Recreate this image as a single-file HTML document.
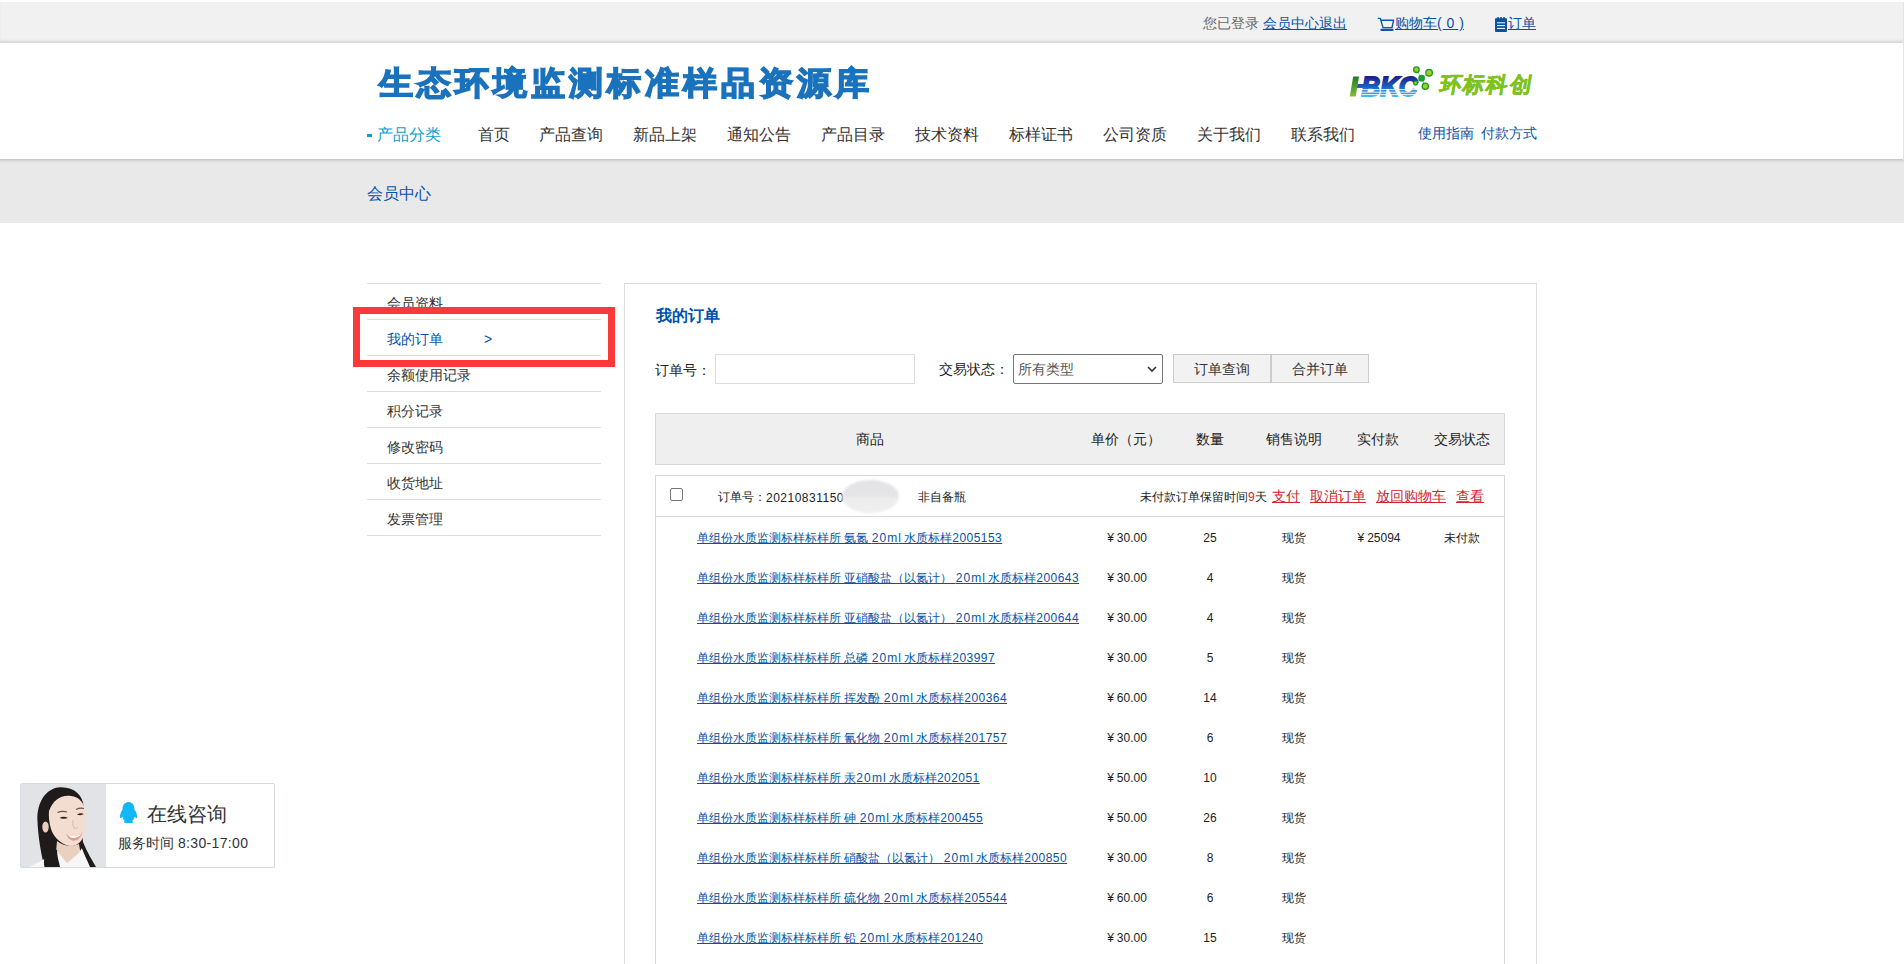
<!DOCTYPE html>
<html><head><meta charset="utf-8">
<style>
*{margin:0;padding:0;box-sizing:border-box}
html,body{width:1904px;height:964px;overflow:hidden;background:#fff}
body{font-family:"Liberation Sans",sans-serif;color:#333;font-size:12px;position:relative}
.abs{position:absolute;white-space:nowrap}
a{color:#0652a8}
#topbar{position:absolute;left:0;top:2px;width:1904px;height:41px;background:#f1f1f1;box-shadow:inset 0 -3px 3px -1px #d6d6d6}
#header{position:absolute;left:0;top:43px;width:1904px;height:117px;background:#fff;border-bottom:1px solid #c8c8c8}
#band{position:absolute;left:0;top:160px;width:1904px;height:63px;background:linear-gradient(#d2d2d2 0px,#e1e1e1 1.5px,#e9e9e9 3.5px,#e9e9e9 100%)}
.logo{font-weight:bold;color:#1a72bd;font-size:34px;letter-spacing:4px;-webkit-text-stroke:1.6px #1a72bd}
.nav{font-size:16px;color:#333}
.side{position:absolute;left:367px;width:234px;height:36px;border-bottom:1px solid #ddd}
.side span{position:absolute;left:20px;top:10.5px;font-size:14px;color:#333}
#panel{position:absolute;left:624px;top:283px;width:913px;height:700px;border:1px solid #ddd}
.th{position:absolute;font-size:14px;color:#222}
.row{position:absolute;left:0;width:849px;height:40px}
.c{position:absolute;font-size:12px;color:#222;white-space:nowrap}
.ctr{text-align:center}
.dg{position:relative;top:1px}
.pl{color:#0652a8;text-decoration:underline}
</style></head><body>

<div id="topbar"></div>
<div class="abs" style="left:1203px;top:15px;font-size:14px;color:#666">您已登录 <a style="color:#0652a8;text-decoration:underline">会员中心退出</a></div>
<svg class="abs" style="left:1377px;top:17px" width="18" height="15" viewBox="0 0 18 15"><path d="M0.8 1.4H3.3L6 10.6H15L16.6 3.2H4" fill="none" stroke="#0b56a8" stroke-width="1.4" stroke-linejoin="round"/><path d="M4.5 12.9H15.5" stroke="#0b56a8" stroke-width="2.3" stroke-linecap="round"/></svg>
<div class="abs" style="left:1395px;top:15px;font-size:14px;color:#0652a8;text-decoration:underline">购物车(<span style="margin:0 1px">&nbsp;0&nbsp;</span>)</div>
<svg class="abs" style="left:1495px;top:17px" width="12" height="15" viewBox="0 0 12 15"><rect x="0" y="1.2" width="12" height="13.8" rx="0.8" fill="#0b52a3"/><circle cx="3" cy="1.2" r="1.1" fill="#0b52a3"/><circle cx="6" cy="1.2" r="1.1" fill="#0b52a3"/><circle cx="9" cy="1.2" r="1.1" fill="#0b52a3"/><path d="M2 5.8H10M2 8.6H10M2 11.4H10" stroke="#fff" stroke-width="1"/></svg>
<div class="abs" style="left:1508px;top:15px;font-size:14px;color:#0652a8;text-decoration:underline">订单</div>

<div id="header"></div>
<div class="abs logo" style="left:379px;top:61px;transform:scaleY(0.94);transform-origin:0 22px">生态环境监测标准样品资源库</div>

<!-- HBKC logo -->
<svg class="abs" style="left:1345px;top:62px" width="195" height="40" viewBox="0 0 195 40">
 <defs>
  <linearGradient id="gb" x1="0" y1="14" x2="0" y2="35" gradientUnits="userSpaceOnUse"><stop offset="0" stop-color="#1f1a86"/><stop offset="0.5" stop-color="#1a5fc0"/><stop offset="1" stop-color="#40bdf5"/></linearGradient>
  <linearGradient id="gg" x1="0" y1="14" x2="0" y2="35" gradientUnits="userSpaceOnUse"><stop offset="0" stop-color="#1d7a2a"/><stop offset="1" stop-color="#86c232"/></linearGradient>
 </defs>
 <path d="M12.5 22H20L19 26H11.5Z" fill="url(#gb)"/>
 <text x="16.5" y="34.4" font-family="Liberation Sans" font-weight="bold" font-style="italic" font-size="27.5" fill="url(#gb)" stroke="url(#gb)" stroke-width="1.8" textLength="56" lengthAdjust="spacingAndGlyphs">BKC</text>
 <path d="M8.2 14.5H14L10.7 34.4H4.7Z" fill="url(#gg)"/>
 <g fill="#fff"><rect x="17" y="27.2" width="60" height="0.9"/><rect x="17" y="29.7" width="60" height="0.9"/><rect x="17" y="32.2" width="60" height="0.9"/></g>
 <path d="M71.4 7.7L76.6 16.2L84.1 10.7M70.6 21L76.6 16.2L80.3 24.2" fill="none" stroke="#8fd08a" stroke-width="1"/>
 <g fill="#9fcf1c" stroke="#1a9a2a" stroke-width="1.3">
  <circle cx="71.4" cy="7.7" r="2.8"/><circle cx="84.1" cy="10.7" r="3.3"/><circle cx="76.6" cy="16.2" r="2.7" fill="#22a02e"/><circle cx="70.6" cy="21" r="1.9"/><circle cx="80.3" cy="24.2" r="3.1"/>
 </g>
 <g transform="translate(94 0) skewX(-10)">
 <text x="5" y="30.4" font-family="Liberation Sans" font-weight="bold" font-size="21.5" fill="#7dc21e" stroke="#7dc21e" stroke-width="0.5" textLength="92" lengthAdjust="spacing">环标科创</text>
 </g>
</svg>

<div class="abs" style="left:367px;top:134px;width:5px;height:3px;background:#10a0cc"></div><div class="abs nav" style="left:377px;top:125px;color:#10a0cc">产品分类</div>
<div class="abs nav" style="left:478px;top:125px">首页</div>
<div class="abs nav" style="left:539px;top:125px">产品查询</div>
<div class="abs nav" style="left:633px;top:125px">新品上架</div>
<div class="abs nav" style="left:727px;top:125px">通知公告</div>
<div class="abs nav" style="left:821px;top:125px">产品目录</div>
<div class="abs nav" style="left:915px;top:125px">技术资料</div>
<div class="abs nav" style="left:1009px;top:125px">标样证书</div>
<div class="abs nav" style="left:1103px;top:125px">公司资质</div>
<div class="abs nav" style="left:1197px;top:125px">关于我们</div>
<div class="abs nav" style="left:1291px;top:125px">联系我们</div>
<div class="abs" style="left:1418px;top:125px;font-size:14px;color:#0652a8">使用指南<span style="margin-left:7px">付款方式</span></div>

<div id="band"></div>
<div class="abs" style="left:1903px;top:2px;width:1px;height:158px;background:#e4e4e4"></div>
<div class="abs" style="left:367px;top:184px;font-size:16px;color:#0652a8">会员中心</div>

<!-- sidebar -->
<div class="abs" style="left:367px;top:283px;width:234px;border-top:1px solid #ddd"></div>
<div class="side" style="top:284px"><span>会员资料</span></div>
<div class="side" style="top:320px"><span style="color:#0652a8">我的订单</span><span style="left:117px;color:#0652a8">&gt;</span></div>
<div class="side" style="top:356px"><span>余额使用记录</span></div>
<div class="side" style="top:392px"><span>积分记录</span></div>
<div class="side" style="top:428px"><span>修改密码</span></div>
<div class="side" style="top:464px"><span>收货地址</span></div>
<div class="side" style="top:500px"><span>发票管理</span></div>
<div class="abs" style="left:353px;top:307px;width:262px;height:60px;border:7px solid #fa3a3a"></div>

<!-- panel -->
<div id="panel"></div>
<div class="abs" style="left:656px;top:305.5px;font-size:16px;font-weight:bold;color:#0050ae">我的订单</div>
<div class="abs" style="left:655px;top:361.5px;font-size:14px;color:#222">订单号：</div>
<div class="abs" style="left:715px;top:354px;width:200px;height:30px;border:1px solid #ddd"></div>
<div class="abs" style="left:939px;top:361px;font-size:14px;color:#222">交易状态：</div>
<div class="abs" style="left:1013px;top:354px;width:150px;height:30px;border:1px solid #767676;border-radius:2px"></div>
<div class="abs" style="left:1018px;top:361px;font-size:14px;color:#555">所有类型</div>
<svg class="abs" style="left:1147px;top:365px" width="10" height="8" viewBox="0 0 10 8"><path d="M1 2L5 6L9 2" fill="none" stroke="#333" stroke-width="1.6"/></svg>
<div class="abs" style="left:1173px;top:354px;width:98px;height:29px;border:1px solid #ccc;background:#f2f2f2"></div>
<div class="abs" style="left:1271px;top:354px;width:98px;height:29px;border:1px solid #ccc;background:#f2f2f2"></div>
<div class="abs" style="left:1194px;top:361px;font-size:14px;color:#333">订单查询</div>
<div class="abs" style="left:1292px;top:361px;font-size:14px;color:#333">合并订单</div>

<!-- table header -->
<div class="abs" style="left:655px;top:413px;width:850px;height:52px;border:1px solid #d8d8d8;background:#efefef"></div>
<div class="th abs" style="left:856px;top:431px">商品</div>
<div class="th abs" style="left:1091px;top:431px">单价（元）</div>
<div class="th abs" style="left:1196px;top:431px">数量</div>
<div class="th abs" style="left:1266px;top:431px">销售说明</div>
<div class="th abs" style="left:1357px;top:431px">实付款</div>
<div class="th abs" style="left:1434px;top:431px">交易状态</div>

<!-- order -->
<div class="abs" style="left:655px;top:475px;width:850px;height:520px;border:1px solid #d8d8d8"></div>
<div class="abs" style="left:656px;top:516px;width:848px;border-top:1px solid #d8d8d8"></div>
<div class="abs" style="left:670px;top:488px;width:13px;height:13px;border:1px solid #767676;border-radius:2px;background:#fff"></div>
<div class="c" style="left:718px;top:489px">订单号：<span class="dg" style="letter-spacing:0.5px">20210831150</span></div>
<div class="abs" style="left:842px;top:480px;width:57px;height:33px;border-radius:50%;background:linear-gradient(#e3e3e5 0%,#e5e5e7 50%,#ececed 55%,#efefef 100%);filter:blur(0.8px)"></div>
<div class="c" style="left:918px;top:489px">非自备瓶</div>
<div class="c" style="left:1140px;top:489px">未付款订单保留时间<span style="color:#d0242e">9</span>天</div>
<div class="c" style="left:1272px;top:488px;font-size:14px;color:#d0242e;text-decoration:underline">支付</div>
<div class="c" style="left:1310px;top:488px;font-size:14px;color:#d0242e;text-decoration:underline">取消订单</div>
<div class="c" style="left:1376px;top:488px;font-size:14px;color:#d0242e;text-decoration:underline">放回购物车</div>
<div class="c" style="left:1456px;top:488px;font-size:14px;color:#d0242e;text-decoration:underline">查看</div>

<div id="rows">
<div class="c pl" style="left:697px;top:530px">单组份水质监测标样标样所 氨氮 <span style="letter-spacing:1.1px">20m</span>l 水质标样<span style="letter-spacing:0.45px">2005153</span></div>
<div class="c ctr" style="left:1087px;width:80px;top:530px"><span class="dg"><span style="margin-right:3px">¥</span>30.00</span></div>
<div class="c ctr" style="left:1170px;width:80px;top:530px"><span class="dg">25</span></div>
<div class="c ctr" style="left:1254px;width:80px;top:530px">现货</div>
<div class="c ctr" style="left:1339px;width:80px;top:530px"><span class="dg"><span style="margin-right:3px">¥</span>25094</span></div>
<div class="c ctr" style="left:1422px;width:80px;top:530px">未付款</div>
<div class="c pl" style="left:697px;top:570px">单组份水质监测标样标样所 亚硝酸盐（以氮计） <span style="letter-spacing:1.1px">20m</span>l 水质标样<span style="letter-spacing:0.45px">200643</span></div>
<div class="c ctr" style="left:1087px;width:80px;top:570px"><span class="dg"><span style="margin-right:3px">¥</span>30.00</span></div>
<div class="c ctr" style="left:1170px;width:80px;top:570px"><span class="dg">4</span></div>
<div class="c ctr" style="left:1254px;width:80px;top:570px">现货</div>
<div class="c pl" style="left:697px;top:610px">单组份水质监测标样标样所 亚硝酸盐（以氮计） <span style="letter-spacing:1.1px">20m</span>l 水质标样<span style="letter-spacing:0.45px">200644</span></div>
<div class="c ctr" style="left:1087px;width:80px;top:610px"><span class="dg"><span style="margin-right:3px">¥</span>30.00</span></div>
<div class="c ctr" style="left:1170px;width:80px;top:610px"><span class="dg">4</span></div>
<div class="c ctr" style="left:1254px;width:80px;top:610px">现货</div>
<div class="c pl" style="left:697px;top:650px">单组份水质监测标样标样所 总磷 <span style="letter-spacing:1.1px">20m</span>l 水质标样<span style="letter-spacing:0.45px">203997</span></div>
<div class="c ctr" style="left:1087px;width:80px;top:650px"><span class="dg"><span style="margin-right:3px">¥</span>30.00</span></div>
<div class="c ctr" style="left:1170px;width:80px;top:650px"><span class="dg">5</span></div>
<div class="c ctr" style="left:1254px;width:80px;top:650px">现货</div>
<div class="c pl" style="left:697px;top:690px">单组份水质监测标样标样所 挥发酚 <span style="letter-spacing:1.1px">20m</span>l 水质标样<span style="letter-spacing:0.45px">200364</span></div>
<div class="c ctr" style="left:1087px;width:80px;top:690px"><span class="dg"><span style="margin-right:3px">¥</span>60.00</span></div>
<div class="c ctr" style="left:1170px;width:80px;top:690px"><span class="dg">14</span></div>
<div class="c ctr" style="left:1254px;width:80px;top:690px">现货</div>
<div class="c pl" style="left:697px;top:730px">单组份水质监测标样标样所 氰化物 <span style="letter-spacing:1.1px">20m</span>l 水质标样<span style="letter-spacing:0.45px">201757</span></div>
<div class="c ctr" style="left:1087px;width:80px;top:730px"><span class="dg"><span style="margin-right:3px">¥</span>30.00</span></div>
<div class="c ctr" style="left:1170px;width:80px;top:730px"><span class="dg">6</span></div>
<div class="c ctr" style="left:1254px;width:80px;top:730px">现货</div>
<div class="c pl" style="left:697px;top:770px">单组份水质监测标样标样所 汞<span style="letter-spacing:1.1px">20m</span>l 水质标样<span style="letter-spacing:0.45px">202051</span></div>
<div class="c ctr" style="left:1087px;width:80px;top:770px"><span class="dg"><span style="margin-right:3px">¥</span>50.00</span></div>
<div class="c ctr" style="left:1170px;width:80px;top:770px"><span class="dg">10</span></div>
<div class="c ctr" style="left:1254px;width:80px;top:770px">现货</div>
<div class="c pl" style="left:697px;top:810px">单组份水质监测标样标样所 砷 <span style="letter-spacing:1.1px">20m</span>l 水质标样<span style="letter-spacing:0.45px">200455</span></div>
<div class="c ctr" style="left:1087px;width:80px;top:810px"><span class="dg"><span style="margin-right:3px">¥</span>50.00</span></div>
<div class="c ctr" style="left:1170px;width:80px;top:810px"><span class="dg">26</span></div>
<div class="c ctr" style="left:1254px;width:80px;top:810px">现货</div>
<div class="c pl" style="left:697px;top:850px">单组份水质监测标样标样所 硝酸盐（以氮计） <span style="letter-spacing:1.1px">20m</span>l 水质标样<span style="letter-spacing:0.45px">200850</span></div>
<div class="c ctr" style="left:1087px;width:80px;top:850px"><span class="dg"><span style="margin-right:3px">¥</span>30.00</span></div>
<div class="c ctr" style="left:1170px;width:80px;top:850px"><span class="dg">8</span></div>
<div class="c ctr" style="left:1254px;width:80px;top:850px">现货</div>
<div class="c pl" style="left:697px;top:890px">单组份水质监测标样标样所 硫化物 <span style="letter-spacing:1.1px">20m</span>l 水质标样<span style="letter-spacing:0.45px">205544</span></div>
<div class="c ctr" style="left:1087px;width:80px;top:890px"><span class="dg"><span style="margin-right:3px">¥</span>60.00</span></div>
<div class="c ctr" style="left:1170px;width:80px;top:890px"><span class="dg">6</span></div>
<div class="c ctr" style="left:1254px;width:80px;top:890px">现货</div>
<div class="c pl" style="left:697px;top:930px">单组份水质监测标样标样所 铅 <span style="letter-spacing:1.1px">20m</span>l 水质标样<span style="letter-spacing:0.45px">201240</span></div>
<div class="c ctr" style="left:1087px;width:80px;top:930px"><span class="dg"><span style="margin-right:3px">¥</span>30.00</span></div>
<div class="c ctr" style="left:1170px;width:80px;top:930px"><span class="dg">15</span></div>
<div class="c ctr" style="left:1254px;width:80px;top:930px">现货</div>
</div>

<!-- chat widget -->
<div class="abs" style="left:20px;top:783px;width:255px;height:85px;border:1px solid #d5d9e6;border-radius:2px;background:#fff"></div>
<div class="abs" style="left:21px;top:784px;width:85px;height:83px;background:#e2e3e7;overflow:hidden">
 <svg width="85" height="83" viewBox="0 0 85 83">
  <path d="M23.5 83 C20 70 17 52 16.4 36 C16 18 25 4 39.3 3.3 C54 3 62 12 62.5 22 C63 40 61 52 62 58 C66 68 71 76 75 83Z" fill="#1f1b1b"/>
  <path d="M28 27 C32 16 40 10.6 50 12 C58 13 63 18 64.5 28 C66 40 65 50 60 57 C56 62 50 63 45 61 C38 58 32 52 30 45 C28 38 27.5 32 28 27Z" fill="#f3ddd0"/>
  <ellipse cx="24.5" cy="43" rx="3.2" ry="5.5" fill="#eacdbd"/>
  <path d="M36 57 C42 62 50 63 58 60 L60 72 L46 81 L35 68Z" fill="#ead0bf"/>
  <path d="M8 83 C18 78 30 72 36 67 L46 79 L57 70 L61 64 C65 71 68 77 70 83Z" fill="#f6f6f7"/>
  <path d="M23.5 83 C22 76 24 70 27 62 L36 66 C36 72 38 78 39 83Z" fill="#1f1b1b"/>
  <path d="M61 57 C64 66 69 74 73 83 L69 83 C66 76 62 68 59.5 60Z" fill="#1f1b1b"/>
  <path d="M36.5 28.5 Q41 26.5 46 28 M55 25.5 Q59 23.5 63 24.5" stroke="#6a5048" stroke-width="1.1" fill="none"/>
  <path d="M38.5 34 Q42.5 31.5 47 34 Q42.5 35.5 38.5 34Z" fill="#2a1f1c"/>
  <path d="M56 30.5 Q59.5 28.5 63 30 Q59.5 32 56 30.5Z" fill="#2a1f1c"/>
  <path d="M52 36 Q51 42 53 44 Q55.5 45 57 43.5" stroke="#dcb9a8" stroke-width="1" fill="none"/>
  <path d="M45 50 Q53 55 61.5 49 Q58 58 51 56.5 Q47 55 45 50Z" fill="#e79a94"/>
  <path d="M46.5 50.8 Q53 53.5 60.5 50 Q57 54 52 54 Q48.5 53.5 46.5 50.8Z" fill="#ffffff"/>
 </svg>
</div>
<svg class="abs" style="left:119px;top:801px" width="19" height="23" viewBox="0 0 19 23"><path d="M9.5 1C5 1 3.5 5 3.5 8.5C2 10.5 0.5 14 1 17C2 17.5 3 16 3.5 15.5C4 18 5 19.5 6 20C4 21 5 22.5 9.5 22C14 22.5 15 21 13 20C14 19.5 15 18 15.5 15.5C16 16 17 17.5 18 17C18.5 14 17 10.5 15.5 8.5C15.5 5 14 1 9.5 1Z" fill="#12b7f5"/></svg>
<div class="abs" style="left:147px;top:800.5px;font-size:20px;color:#333">在线咨询</div>
<div class="abs" style="left:118px;top:835px;font-size:14px;color:#333">服务时间 <span style="letter-spacing:0.35px">8:30-17:00</span></div>

</body></html>
